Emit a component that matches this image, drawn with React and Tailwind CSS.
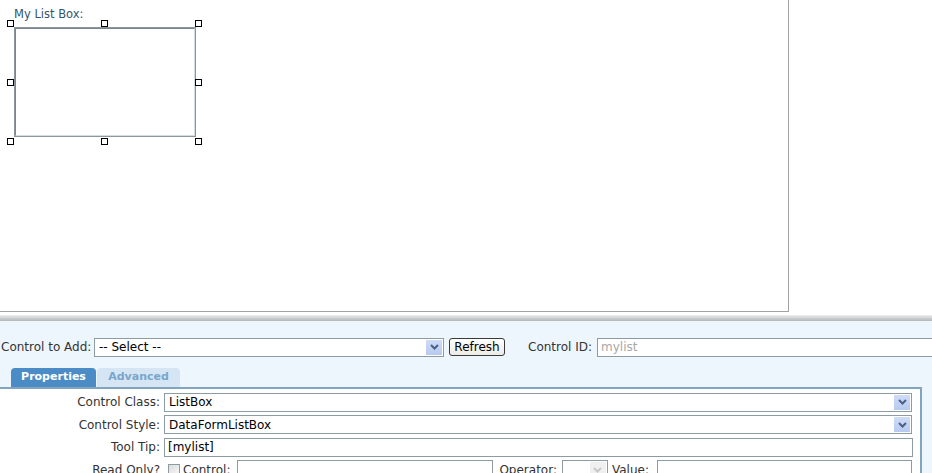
import React from "react";

const BORDER = "border border-[#8d9ba3]";

function Chevron({ color = "#4a5f86" }) {
  return (
    <svg width="9" height="6" viewBox="0 0 9 6">
      <path d="M1 1 L4.5 4.5 L8 1" fill="none" stroke={color} strokeWidth="2" />
    </svg>
  );
}

function Select({ value, className = "", disabled = false }) {
  return (
    <div className={`shrink-0 flex items-center h-[19px] bg-white ${BORDER} ${className}`}>
      <span className="flex-1 pl-[4px] text-black leading-none whitespace-nowrap overflow-hidden">{value}</span>
      <span
        className={`w-[16px] h-[15px] mr-[1px] flex items-center justify-center ${
          disabled ? "bg-[#f0f0f0]" : "bg-gradient-to-b from-[#cfdcf8] to-[#b6c9f0]"
        }`}
      >
        <Chevron color={disabled ? "#c8c8c8" : "#4a5f86"} />
      </span>
    </div>
  );
}

function Input({ value, className = "", muted = false }) {
  return (
    <div className={`shrink-0 flex items-center h-[19px] bg-white ${BORDER} ${className}`}>
      <span className={`pl-[3px] leading-none whitespace-nowrap ${muted ? "text-[#a8a8a8]" : "text-black"}`}>{value}</span>
    </div>
  );
}

function Handle({ className }) {
  return <div className={`absolute w-[7px] h-[7px] border border-black bg-white ${className}`} />;
}

function Row({ label, children }) {
  return (
    <div className="flex items-center h-[20px]">
      <span className="shrink-0 w-[160px] text-right text-[#333] whitespace-nowrap">{label}</span>
      <div className="ml-[4px] flex items-center">{children}</div>
    </div>
  );
}

export default function App() {
  return (
    <div className="w-[932px] h-[473px] overflow-hidden bg-white text-[12px] font-['DejaVu_Sans',Verdana,sans-serif]">
      {/* design canvas */}
      <div className="w-[789px] h-[312px] border-r border-b border-[#a3a3a3] pl-[14px] pt-[8px]">
        <div className="text-[#33566d] text-[11.5px] leading-[13px]">My List Box:</div>
        <div className="relative mt-[6px] w-[182px] h-[110px] border border-[#8a979c] p-0">
          <div className="w-full h-full border border-t-[#7d878b] border-l-[#7d878b] border-r-[#d4dcdf] border-b-[#d4dcdf] bg-white" />
          <Handle className="-left-[8px] -top-[8px]" />
          <Handle className="left-[86px] -top-[8px]" />
          <Handle className="-right-[7px] -top-[8px]" />
          <Handle className="-left-[8px] top-[51px]" />
          <Handle className="-right-[7px] top-[51px]" />
          <Handle className="-left-[8px] -bottom-[9px]" />
          <Handle className="left-[86px] -bottom-[9px]" />
          <Handle className="-right-[7px] -bottom-[9px]" />
        </div>
      </div>

      {/* separator */}
      <div className="h-[3px] bg-white" />
      <div className="h-[6px] bg-gradient-to-b from-[#ededed] to-[#b2b6b9]" />

      {/* bottom panel */}
      <div className="bg-[#eef6fd] h-[160px] pt-[16px]">
        <div className="flex items-center h-[20px]">
          <span className="shrink-0 w-[94px] pl-[1px] text-[#333] whitespace-nowrap">Control to Add:</span>
          <Select value="-- Select --" className="w-[350px]" />
          <button className="shrink-0 ml-[5px] w-[56px] h-[18px] rounded-[3px] border border-[#3a3a3a] bg-gradient-to-b from-white to-[#ecebe6] text-black leading-none">
            Refresh
          </button>
          <span className="shrink-0 ml-[23px] text-[#333] whitespace-nowrap">Control ID:</span>
          <Input value="mylist" muted className="ml-[5px] w-[340px]" />
        </div>

        <div className="flex mt-[11px] pl-[11px] h-[19px] text-[11px]">
          <div className="w-[85px] rounded-t-[4px] bg-[#4b8bc6] text-white font-bold flex items-center justify-center">
            Properties
          </div>
          <div className="ml-[1px] w-[83px] rounded-t-[4px] bg-[#d5e5f4] text-[#79a5cd] font-bold flex items-center justify-center">
            Advanced
          </div>
        </div>

        <div className="w-[922px] h-[100px] border-t-2 border-r-2 border-[#82a4bf] bg-white pt-[3px] flex flex-col gap-[2.5px]">
          <Row label="Control Class:">
            <Select value="ListBox" className="w-[748px]" />
          </Row>
          <Row label="Control Style:">
            <Select value="DataFormListBox" className="w-[748px]" />
          </Row>
          <Row label="Tool Tip:">
            <Input value="[mylist]" className="w-[749px]" />
          </Row>
          <Row label="Read Only?">
            <span className="shrink-0 ml-[4px] w-[12px] h-[12px] border border-[#8d9ba3] bg-gradient-to-br from-[#dcdcdc] to-[#f8f8f8]" />
            <span className="shrink-0 ml-[3px] text-[#333]">Control:</span>
            <Input value="" className="ml-[7px] w-[256px]" />
            <span className="shrink-0 ml-[6px] text-[#333]">Operator:</span>
            <Select value="" disabled className="ml-[5px] w-[46px]" />
            <span className="shrink-0 ml-[4px] text-[#333]">Value:</span>
            <Input value="" className="ml-[8px] w-[255px]" />
          </Row>
        </div>
      </div>
    </div>
  );
}
